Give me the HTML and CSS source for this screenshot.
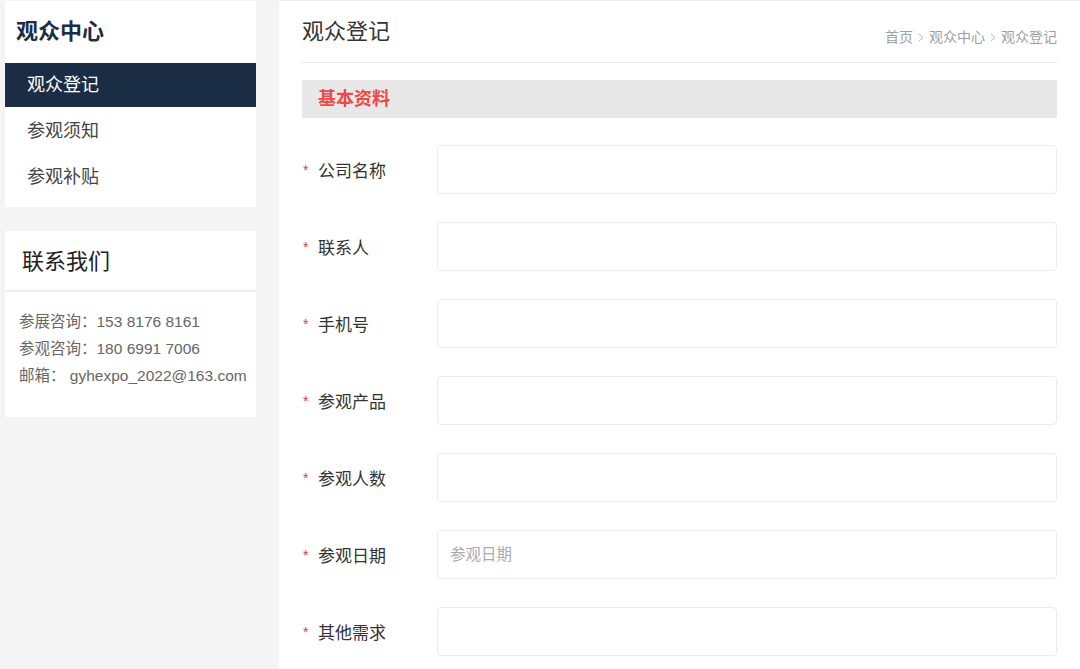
FILE: index.html
```html
<!DOCTYPE html>
<html lang="zh">
<head>
<meta charset="utf-8">
<title>观众登记</title>
<link rel="stylesheet" href="styles.css">
</head>
<body>
<div class="page">
  <aside class="side">
    <div class="card nav-card">
      <h2 class="nav-title">观众中心</h2>
      <ul class="nav">
        <li class="nav-item active">观众登记</li>
        <li class="nav-item">参观须知</li>
        <li class="nav-item">参观补贴</li>
      </ul>
    </div>
    <div class="card contact-card">
      <h3 class="contact-title">联系我们</h3>
      <div class="contact-body">
        <p>参展咨询：153 8176 8161</p>
        <p>参观咨询：180 6991 7006</p>
        <p>邮箱： gyhexpo_2022@163.com</p>
      </div>
    </div>
  </aside>
  <main class="main">
    <div class="main-head">
      <h1 class="main-title">观众登记</h1>
      <div class="crumbs">首页<svg class="sep" width="6" height="9" viewBox="0 0 6 9"><path d="M1 1 L5 4.5 L1 8" fill="none" stroke="#b5b5b5" stroke-width="1"/></svg>观众中心<svg class="sep" width="6" height="9" viewBox="0 0 6 9"><path d="M1 1 L5 4.5 L1 8" fill="none" stroke="#b5b5b5" stroke-width="1"/></svg>观众登记</div>
    </div>
    <div class="section-bar">基本资料</div>
    <form class="form">
      <div class="row"><label class="lbl"><span class="star">*</span>公司名称</label><input class="inp" type="text"></div>
      <div class="row"><label class="lbl"><span class="star">*</span>联系人</label><input class="inp" type="text"></div>
      <div class="row"><label class="lbl"><span class="star">*</span>手机号</label><input class="inp" type="text"></div>
      <div class="row"><label class="lbl"><span class="star">*</span>参观产品</label><input class="inp" type="text"></div>
      <div class="row"><label class="lbl"><span class="star">*</span>参观人数</label><input class="inp" type="text"></div>
      <div class="row"><label class="lbl"><span class="star">*</span>参观日期</label><input class="inp" type="text" placeholder="参观日期"></div>
      <div class="row"><label class="lbl"><span class="star">*</span>其他需求</label><input class="inp" type="text"></div>
    </form>
  </main>
</div>
</body>
</html>
```
FILE: styles.css
```css
* { box-sizing: border-box; margin: 0; padding: 0; }
html, body { height: 100%; }
body {
  background: #f4f4f4;
  font-family: "Liberation Sans", "Noto Sans CJK SC", sans-serif;
  color: #333;
  overflow: hidden;
}
.page {
  display: flex;
  align-items: flex-start;
  height: 669px;
}
.side {
  width: 251px;
  margin-left: 5px;
  margin-top: 1px;
  display: flex;
  flex-direction: column;
  gap: 24px;
}
.card { background: #fff; }
.nav-card { height: 206px; }
.nav-title {
  font-size: 22px;
  font-weight: bold;
  color: #1b2d45;
  padding: 16px 0 0 11px;
  height: 62px;
  line-height: 30px;
}
.nav { list-style: none; }
.nav-item {
  height: 46px;
  line-height: 46px;
  padding-top: 1px;
  padding-left: 22px;
  font-size: 18px;
  color: #444;
}
.nav-item.active {
  background: #1b2d45;
  color: #fff;
  height: 44px;
  line-height: 43px;
}
.contact-card { height: 186px; }
.contact-title {
  font-size: 22px;
  font-weight: normal;
  color: #222;
  height: 61px;
  line-height: 62px;
  padding-left: 17px;
  border-bottom: 2px solid #eeeeee;
}
.contact-body {
  padding: 16px 0 0 14px;
  font-size: 15.5px;
  color: #666;
  line-height: 27px;
  white-space: nowrap;
}
.main {
  margin-left: 23px;
  flex: 1;
  background: #fff;
  height: 669px;
  padding: 0 23px 0 23px;
  border-top: 1px solid #eeeeee;
}
.main-head {
  display: flex;
  justify-content: space-between;
  align-items: flex-end;
  height: 62px;
  border-bottom: 1px solid #e6e6e6;
  padding-bottom: 15px;
}
.main-title {
  font-size: 22px;
  font-weight: normal;
  color: #333;
  line-height: 30px;
}
.crumbs {
  font-size: 14px;
  color: #a0a0a0;
  line-height: 18px;
  display: flex;
  align-items: center;
  margin-bottom: 1px;
}
.sep {
  margin: 0 5px;
  display: block;
}
.section-bar {
  margin-top: 17px;
  height: 38px;
  line-height: 38px;
  background: #e8e8e8;
  color: #f04848;
  font-weight: bold;
  font-size: 18px;
  padding-left: 16px;
}
.form {
  padding-top: 27px;
  display: flex;
  flex-direction: column;
  gap: 28px;
}
.row {
  display: flex;
  align-items: center;
  height: 49px;
}
.lbl {
  width: 135px;
  font-size: 17px;
  color: #333;
  display: flex;
  align-items: center;
}
.star {
  color: #e53935;
  font-size: 14px;
  width: 16px;
  padding-left: 1px;
}
.inp {
  flex: 1;
  height: 49px;
  border: 1px solid #ececec;
  border-radius: 4px;
  padding: 0 12px;
  font-size: 15.5px;
  font-family: inherit;
  color: #333;
  outline: none;
  background: #fff;
}
.inp::placeholder { color: #aaa; }
```
